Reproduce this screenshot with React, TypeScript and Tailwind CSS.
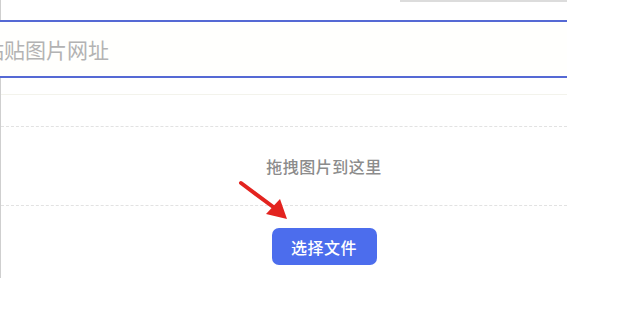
import React from 'react';

const CJK = { fontFamily: '"Noto Sans CJK SC", "Noto Sans", sans-serif' };

function RedArrow() {
  return (
    <svg className="absolute left-[236px] top-[178px]" width="60" height="46" viewBox="0 0 60 46">
      <line x1="5" y1="5" x2="40" y2="31" stroke="#e3231f" strokeWidth="4" strokeLinecap="round" />
      <polygon points="51,41 30,36 44,21" fill="#e3231f" />
    </svg>
  );
}

export default function App() {
  return (
    <div className="relative w-[620px] h-[309px] bg-white overflow-hidden" style={CJK}>
      <div className="w-[567px] h-[278px] border-l border-[#cfcfcf] flex flex-col">
        {/* 上の入力欄の枠の下端 */}
        <div className="ml-[399px] w-[167px] h-[2px] bg-[#dcdcdc]" />

        {/* URL入力欄 */}
        <div className="mt-[18px] -ml-px h-[58px] border-y-2 border-[#5569d4] bg-[#fffffd] flex items-center overflow-hidden">
          <span className="-ml-[17px] text-[21px] text-[#b3b3b3] whitespace-nowrap leading-none">粘贴图片网址</span>
        </div>

        <div className="mt-[16px] h-px bg-[#f3f3ec]" />

        {/* ドラッグ領域 */}
        <div className="mt-[31px] border-t border-dashed border-[#e2e2e2]" />
        <div className="h-[78px] flex items-center justify-center pl-[80px]">
          <span className="text-[16px] font-medium text-[#8c8c8c] tracking-[0.5px]">拖拽图片到这里</span>
        </div>
        <div className="border-t border-dashed border-[#e2e2e2]" />

        <div className="mt-[22px] flex justify-center pl-[80px]">
          <button className="w-[105px] h-[37px] rounded-[7px] bg-[#4c6ded] text-white text-[16px] font-medium tracking-[0.5px]">
            选择文件
          </button>
        </div>
      </div>
      <RedArrow />
    </div>
  );
}
